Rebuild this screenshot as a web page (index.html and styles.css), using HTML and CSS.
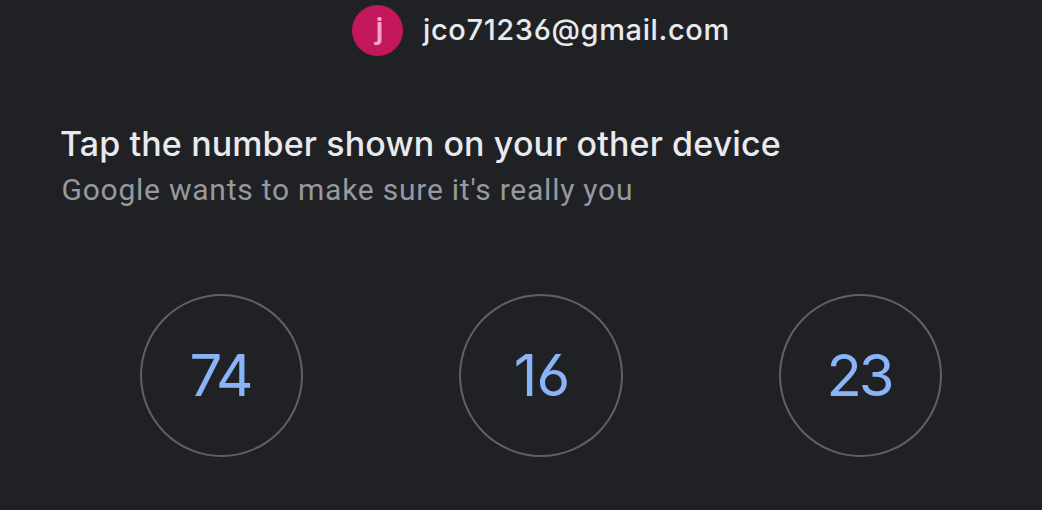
FILE: index.html
```html
<!DOCTYPE html>
<html lang="en">
<head>
<meta charset="utf-8">
<title>Verify it's you</title>
<link rel="stylesheet" href="styles.css">
</head>
<body>
<main class="challenge">
  <div class="account">
    <span class="avatar">j</span>
    <span class="email">jco71236@gmail.com</span>
  </div>
  <h1 class="title"><span>Tap the number shown on your other device</span></h1>
  <p class="subtitle"><span>Google wants to make sure it's really you</span></p>
  <div class="numbers">
    <button class="number" type="button"><span>74</span></button>
    <button class="number number-loose" type="button"><span>16</span></button>
    <button class="number" type="button"><span>23</span></button>
  </div>
</main>
</body>
</html>
```

FILE: styles.css
```css
* {
  box-sizing: border-box;
}

body {
  margin: 0;
  background: #202125;
  font-family: Inter, Roboto, sans-serif;
  font-feature-settings: "cv03" 1;
}

.challenge {
  height: 510px;
  padding: 5px 62px 0;
  overflow: hidden;
}

.account {
  display: flex;
  align-items: center;
  height: 51px;
  margin-left: 290px;
  gap: 20px;
}

.avatar {
  flex: none;
  width: 51px;
  height: 51px;
  padding-left: 4px;
  border-radius: 50%;
  background: #c2185b;
  color: #f9a5d0;
  font: 500 32px/46px Roboto, sans-serif;
  text-align: center;
}

.email {
  padding-bottom: 2px;
  color: #e8eaed;
  font-size: 29px;
  font-weight: 500;
  line-height: 49px;
  letter-spacing: 0.63px;
  white-space: nowrap;
}

.title {
  margin: 66px 0 0 -2px;
  color: #e8eaed;
  font-size: 34px;
  font-weight: 500;
  line-height: 44px;
  letter-spacing: 0.12px;
  white-space: nowrap;
}

.subtitle {
  margin: 4px 0 0;
  color: #96999d;
  font: 400 30px/40px Roboto, sans-serif;
  letter-spacing: 0.76px;
  text-indent: -0.5px;
  white-space: nowrap;
}

.numbers {
  display: flex;
  justify-content: space-between;
  margin: 84px 38px 0 78px;
}

.number {
  width: 163px;
  height: 163px;
  padding: 0 3px 0 0;
  border: 2px solid #5f6165;
  border-radius: 50%;
  background: transparent;
  color: #8ab4f8;
  font: 400 58px/159px Inter, Roboto, sans-serif;
  font-feature-settings: "cv03" 1;
  letter-spacing: -3px;
}

.number-loose {
  width: 164px;
  padding: 0 0 0 1px;
  letter-spacing: -1px;
}
```
